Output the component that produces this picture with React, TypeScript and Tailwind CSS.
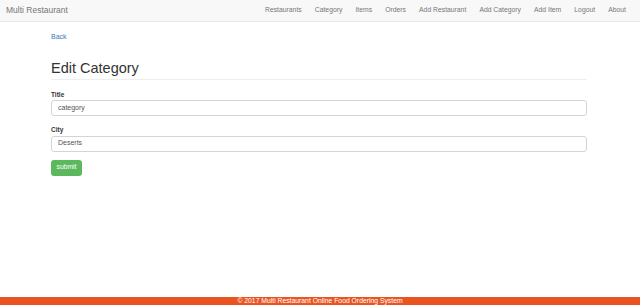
import React from "react";

export default function App() {
  const nav = ["Restaurants", "Category", "Items", "Orders", "Add Restaurant", "Add Category", "Add Item", "Logout", "About"];
  return (
    <div className="relative h-[305px] w-[640px] overflow-hidden bg-white" style={{ fontFamily: '"Liberation Sans", Arial, sans-serif' }}>
      <div className="flex h-[22px] items-center justify-between border-b border-[#e7e7e7] bg-[#f8f8f8] pl-[6px] pr-[14px]">
        <span className="text-[8.5px] leading-none text-[#777]">Multi Restaurant</span>
        <div className="flex items-center gap-[13.1px] text-[6.8px] leading-none text-[#777]">
          {nav.map((n) => (
            <span key={n}>{n}</span>
          ))}
        </div>
      </div>
      <div className="mx-[51px] w-[536px]">
        <div className="mt-[11px] text-[7px] leading-none text-[#337ab7]">Back</div>
        <div className="mt-[21px] text-[14.5px] leading-none text-[#333]">Edit Category</div>
        <div className="mt-[3px] border-t border-[#eee]" />
        <div className="mt-[12px] text-[6.5px] font-bold leading-none text-[#333]">Title</div>
        <div className="mt-[2px] flex h-[16px] items-center rounded-[3px] border border-[#d4d4d4] px-[6px] text-[7px] text-[#555]">category</div>
        <div className="mt-[11px] text-[6.5px] font-bold leading-none text-[#333]">City</div>
        <div className="mt-[2px] flex h-[16px] items-center rounded-[3px] border border-[#d4d4d4] px-[6px] text-[7px] text-[#555]">Deserts</div>
        <div className="mt-[8px] flex h-[16px] w-[31px] items-center justify-center rounded-[3px] bg-[#5cb85c] text-[6.8px] text-white">submit</div>
      </div>
      <div className="absolute bottom-0 left-0 flex h-[8px] w-full items-center justify-center bg-[#e95420] text-[6.8px] leading-none text-white">
        © 2017 Multi Restaurant Online Food Ordering System
      </div>
    </div>
  );
}
